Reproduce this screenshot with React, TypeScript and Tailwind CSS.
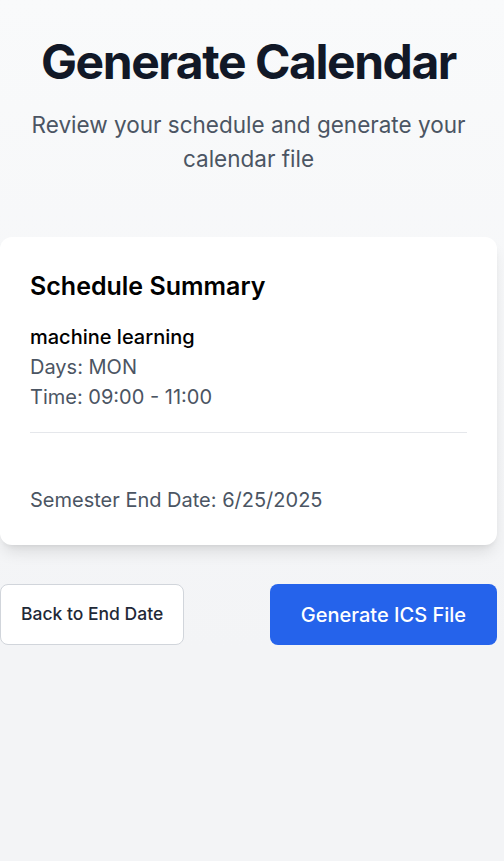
export default function App() {
  return (
    <div className="min-h-screen bg-[#f3f4f6] font-['Inter',sans-serif]">
      <div className="bg-gradient-to-b from-[#f9fafb] to-[#f3f4f6]">
        <div className="w-[497px] pt-[38px] pb-[7px]">
          {/* Header */}
          <div className="text-center mb-[61px]">
            <h1 className="text-5xl leading-none font-bold tracking-[-0.03em] text-[#111827] mb-[22px]">Generate Calendar</h1>
            <p className="text-[22.5px] leading-[34px] text-[#4b5563]">
              Review your schedule and generate your calendar file
            </p>
          </div>

          {/* Summary card */}
          <div className="bg-white rounded-xl shadow-lg px-[30px] pt-[33px] pb-[30px]">
            <h2 className="text-[25px] leading-8 font-semibold text-black mb-5">Schedule Summary</h2>
            <div className="text-xl leading-[30px]">
              <p className="font-medium text-black">machine learning</p>
              <p className="text-[#4b5563]">Days: MON</p>
              <p className="text-[#4b5563]">Time: 09:00 - 11:00</p>
            </div>
            <div className="mt-5 border-t border-[#e5e7eb] pt-[52px]">
              <p className="text-xl leading-[30px] text-[#4b5563]">Semester End Date: 6/25/2025</p>
            </div>
          </div>

          {/* Actions */}
          <div className="mt-[39px] flex justify-between">
            <button className="px-5 bg-white border border-[#d1d5db] rounded-lg text-[17.5px] font-medium text-[#1f2937]">
              Back to End Date
            </button>
            <button className="h-[61px] px-[31px] bg-[#2563eb] rounded-lg text-xl leading-7 font-medium text-white">
              Generate ICS File
            </button>
          </div>
        </div>
      </div>
    </div>
  );
}
